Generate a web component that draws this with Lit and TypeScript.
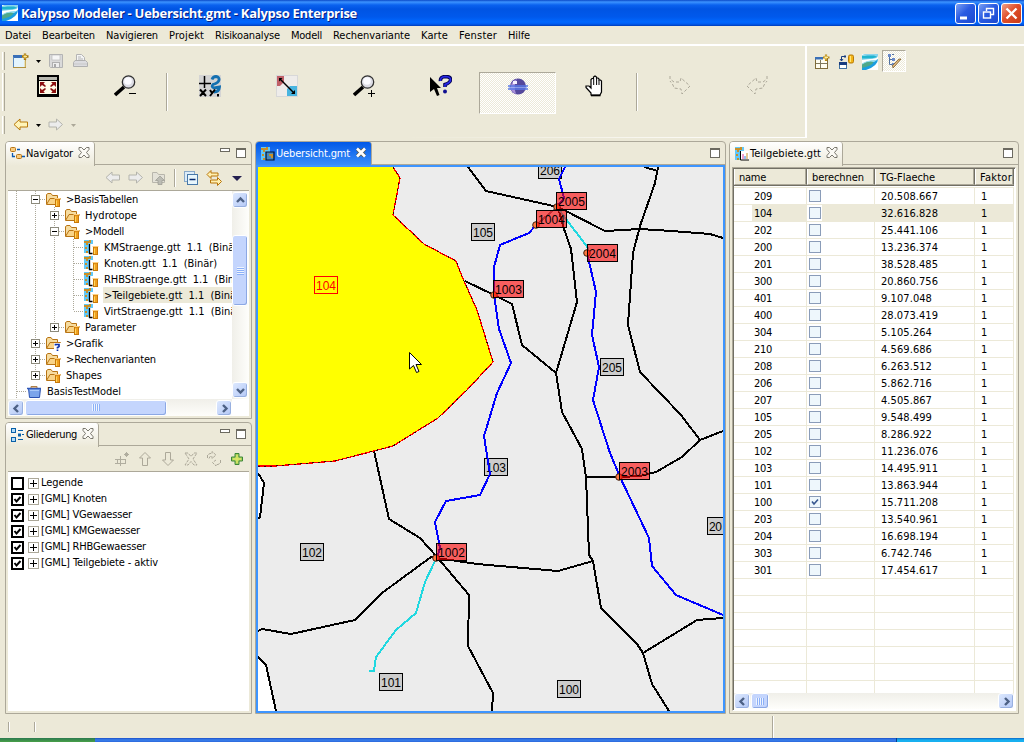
import { LitElement, html, svg, css, nothing } from "lit";
import { customElement, property } from "lit/decorators.js";
import { classMap } from "lit/directives/class-map.js";

/** Text run whose tracking is adjusted so that it fills a given width. */
@customElement("fit-text")
class FitText extends LitElement {
  @property() text = "";
  @property({ type: Number }) w = 0;
  static styles = css`
    :host { display: inline-block; white-space: pre; flex: none; }
    span { display: inline-block; white-space: pre; }
  `;
  render() {
    return html`<span>${this.text}</span>`;
  }
  updated() {
    const s = this.renderRoot.querySelector("span") as HTMLElement;
    s.style.letterSpacing = "0px";
    const n = s.getBoundingClientRect().width;
    if (this.w > 0) s.style.letterSpacing = (this.w - n) / this.text.length + "px";
  }
}

const ico = (body: unknown, w = 16, h = 16) =>
  html`<svg class="ico" width=${w} height=${h} viewBox="0 0 ${w} ${h}">${body}</svg>`;

const wave = svg`<rect width="16" height="16" fill="#fff"/><path d="M0 0H16V2Q15 5 8 5L0 6V3L8 3Z" fill="#8ad4ec"/><path d="M0 1.500L12 1.500L15.500 3Q10 5 0 4.500Z" fill="#1fb4cf"/><path d="M16 5Q16 12 4 16H0V13L11 8Z" fill="#1a9ee0"/><path d="M0 10Q6 6 12 7.500Q10 12 0 14Z" fill="#4fa88a"/><path d="M0 9.500Q6 5.500 15 6L12 8Q6 6.500 0 10.500Z" fill="#90dcf0"/>`;
const folder = svg`<path d="M1.500 13V3.500L3 2.500H6L7.500 4.500H12.500V7" fill="#f6dca0" stroke="#b87414"/><path d="M1.500 13.500L5 7.500H15.500L12 13.500Z" fill="#f9d488" stroke="#b87414"/>`;
const cyl = svg`<rect x="10.500" y="8" width="4" height="7.500" fill="#f0a020" stroke="#c87808"/><path d="M11.500 9.500V15" stroke="#ffd860"/><path d="M9.500 7.500H15.500" stroke="#ffd080"/>`;
const qmark = svg`<rect x="9" y="8" width="7" height="8" fill="#fff"/><path d="M10.500 10.500V9.500H14V11.500L12.500 12.500V13.500M12.500 14.500V16" fill="none" stroke="#0a30a8" stroke-width="1.700"/>`;
const mapBase = svg`<rect x="1" y="1" width="9" height="13" fill="#62c8f8"/><path d="M1 2H8V4H5V6H3V4H1ZM6 1H8V2H6ZM2 8H4V10H2ZM3 12H5V14H3Z" fill="#c89028"/>`;
const icons: Record<string, unknown> = {
  folderDb: ico(svg`${folder}${cyl}`),
  folderQ: ico(svg`${folder}${qmark}`),
  table: ico(svg`${mapBase}<rect x="7" y="5" width="4" height="9" fill="#fff"/><path d="M6.500 5V14.500H9.500" fill="none" stroke="#000" stroke-width="1.300"/>${cyl}`),
  project: ico(svg`<path d="M2.500 5.500H14.500L13.500 14.500H3.500Z" fill="#7aa4ea" stroke="#2850b0"/><path d="M5 5V3.500H11V5" fill="#f4c890" stroke="#b08048"/><path d="M1 5.500H15" stroke="#3058b8" stroke-width="1.500"/><path d="M4 7.500H13" stroke="#a8c8f8"/>`),
  navigator: ico(svg`<rect x="0.500" y="1.500" width="5" height="4" rx="1" fill="#f8cc80" stroke="#b87414"/><rect x="6.500" y="8.500" width="5" height="4" rx="1" fill="#f8cc80" stroke="#b87414"/><path d="M7 3.500H10M2.500 7V10.500H5M12 10.500H15" stroke="#0a58b0" stroke-width="1.300" fill="none"/>`),
  outline: ico(svg`<rect x="1.500" y="1.500" width="4" height="4" fill="#b4dcf8" stroke="#0860a8"/><rect x="1.500" y="10.500" width="4" height="4" fill="#b4dcf8" stroke="#0860a8"/><rect x="8.500" y="7" width="2" height="2" fill="#b4dcf8" stroke="#0860a8"/><path d="M8 3.500H13M12 7.500H14M8 12.500H13" stroke="#0860a8"/>`),
  mapFile: ico(svg`${mapBase}<path d="M6 6H14V14H6Z" fill="#4888b8" stroke="#001030" stroke-width="1.200"/><path d="M9 8H13V12H11V10H9Z" fill="#c89028"/>`),
  chartFile: ico(svg`${mapBase}<path d="M6 5H15V14H6Z" fill="#fff"/><path d="M6.500 5V14H15" fill="none" stroke="#000"/><path d="M9 8V13" stroke="#e040a0"/><path d="M11 10V13" stroke="#3080e0"/><path d="M13 7V13" stroke="#c89028"/>`),
  newWin: ico(svg`<rect x="0.500" y="3.500" width="12" height="11" fill="#e4f4fc" stroke="#b09040"/><rect x="0" y="2" width="9" height="3" fill="#3a70b8"/><path d="M0.500 4V14" stroke="#5888c0"/><path d="M12 7.500V14" stroke="#e8cf80"/><path d="M12 0.500V7M9 3.500H15.500" stroke="#a87808" stroke-width="2.400"/><path d="M12 1.500V5.500M10.500 3.500H14" stroke="#ffe890"/>`),
  save: ico(svg`<path d="M1.500 1.500H14.500V14.500H2.500L1.500 13.500Z" fill="#dadada" stroke="#b4b4b4"/><rect x="4" y="2" width="8" height="5" fill="#f6f6f6" stroke="#b4b4b4" stroke-width=".6"/><rect x="4.500" y="9.500" width="7" height="5" fill="#eee" stroke="#b0b0b0"/><rect x="6" y="11" width="2" height="3" fill="#a8a8a8"/>`),
  print: ico(svg`<path d="M4.500 7V1.500H9.500L12.500 4.500V7" fill="#f4f4f4" stroke="#b4b4b4"/><path d="M6 4H9M6 6H11" stroke="#b4b4b4"/><path d="M3 7.500H13.500L15.500 9.500V13.500H1.500V9.500Z" fill="#dcdce0" stroke="#b0b0b0"/><path d="M2 11H15" stroke="#c8c8c8"/>`),
  back: ico(svg`<path d="M1 7.500L7 2V5H14.500V10H7V13Z" fill="#fff4b8" stroke="#b87808" stroke-linejoin="round"/>`),
  backOff: ico(svg`<path d="M1 7.500L7 2V5H14.500V10H7V13Z" fill="#ececec" stroke="#b4b4ac" stroke-linejoin="round"/>`),
  fwdOff: ico(svg`<path d="M14.500 7.500L8.500 2V5H1V10H8.500V13Z" fill="#ececec" stroke="#b4b4ac" stroke-linejoin="round"/>`),
  upOff: ico(svg`<path d="M1.500 12.500V2.500H6L7.500 4.500H13.500V12.500Z" fill="#e4e2d8" stroke="#b8b6ac"/><path d="M9 6L13.500 10.500H11V14.500H7V10.500H4.500Z" fill="#bcbcb4" stroke="#98988f" stroke-width=".7"/>`),
  collapse: ico(svg`<rect x="1.500" y="1.500" width="10" height="10" fill="#dcecf8" stroke="#88a8c8"/><rect x="4.500" y="4.500" width="10" height="10" fill="#e8f6fc" stroke="#4878a8"/><path d="M6.500 9.500H12.500" stroke="#082c70" stroke-width="1.400"/>`),
  link: ico(svg`<path d="M1 4.500L5 0.500V3H12V6H5V8.500Z" fill="#fff0b0" stroke="#b87408"/><path d="M15.500 11.500L11.500 7.500V10H4.500V13H11.500V15.500Z" fill="#fff0b0" stroke="#b87408"/>`),
  addOff: ico(svg`<path d="M1 8.500H12M1 12.500H12M3.500 8V13M6.500 5V15M12.500 1V6M10 3.500H15M11 2L14 5M14 2L11 5M11.500 8V13" stroke="#b0ad9f" fill="none"/>`),
  arrUp: ico(svg`<path d="M8 1.500L13.500 7H10.500V14.500H5.500V7H2.500Z" fill="none" stroke="#aca899"/>`),
  arrDown: ico(svg`<path d="M8 14.500L13.500 9H10.500V1.500H5.500V9H2.500Z" fill="none" stroke="#aca899"/>`),
  delOff: ico(svg`<path d="M2 2L5 2L8 5.500L11 2H14L10 8L14 14H11L8 10.500L5 14H2L6 8Z" fill="none" stroke="#aca899" stroke-dasharray="3 1"/>`),
  refreshOff: ico(svg`<path d="M1.500 7V4L4 2.500H6V0.500L10 4L6 7.500V5.500H4L3 7.500M14.500 9V12L12 13.500H10V15L6.500 11.500L10 9" fill="none" stroke="#aca899" stroke-dasharray="3 1"/>`),
  plusGreen: ico(svg`<path d="M6 2.500H10V6H13.500V10H10V13.500H6V10H2.500V6H6Z" fill="#a8d060" stroke="#3c8838"/><path d="M8 4V12M4 8H12" stroke="#e0e868" stroke-width="1.400"/>`),
  persNew: ico(svg`<rect x="1.500" y="3.500" width="12" height="11" fill="#fffdf0" stroke="#806c38"/><rect x="1" y="3" width="8" height="2.500" fill="#3a70b8"/><path d="M2 9.500H13M6.500 6V14" stroke="#80785c"/><path d="M12 0.500V7M9 3.500H15.500" stroke="#b88810" stroke-width="2.200"/><path d="M12 1.500V5.500M10.500 3.500H14" stroke="#fff0a0"/>`),
  persDb: ico(svg`<rect x="1.500" y="8.500" width="7" height="6" fill="#fff" stroke="#4070a0"/><rect x="1" y="8" width="8" height="3" fill="#183c80"/><path d="M3.500 7V2.500H8M2 5L3.500 7L5 5M7 1V4" stroke="#183c80" fill="none"/><rect x="10.500" y="1" width="5" height="8" rx="1.500" fill="#f4b418" stroke="#b87c08"/><path d="M12.500 2V8" stroke="#ffe878"/>`),
  wave: ico(wave),
  persTree: ico(svg`<path d="M3.500 1V11.500H6M3.500 6.500H6M6 1.500H8" stroke="#5070a0" fill="none"/><path d="M2 1H5V4H2ZM6 5H9V8H6ZM6 10H9V13H6Z" fill="#6888c8"/><path d="M15 6L9 13L7 15L6.500 12.500L13 6Z" fill="#e0b880" stroke="#806028" stroke-width=".8"/>`),
  fit: ico(svg`<rect width="22" height="22" fill="#000"/><rect x="2" y="2" width="18" height="3" fill="#b8b8b0"/><rect x="2" y="6" width="18" height="13" fill="#fffde8"/><path d="M3 7H8L6.500 8.500L9 11L8 12L5 10L3 12ZM19 7H14L15.500 8.500L13 11L14 12L17 10L19 12ZM3 18H8L6.500 16.500L9 14L8 13L5 15L3 13ZM19 18H14L15.500 16.500L13 14L14 13L17 15L19 13Z" fill="#8c1010"/>`, 22, 22),
  zoomOut: ico(svg`<path d="M1 20L10 12" stroke="#000" stroke-width="3.600"/><circle cx="14.500" cy="7" r="6.200" fill="#dcdce4" stroke="#303030" stroke-width="1.300"/><circle cx="14" cy="6" r="3.800" fill="#fbfbff"/><path d="M15 18.500H22" stroke="#000"/>`, 22, 22),
  zoomIn: ico(svg`<path d="M1 20L10 12" stroke="#000" stroke-width="3.600"/><circle cx="14.500" cy="7" r="6.200" fill="#dcdce4" stroke="#303030" stroke-width="1.300"/><circle cx="14" cy="6" r="3.800" fill="#fbfbff"/><path d="M15 18.500H22M18.500 15V22" stroke="#000"/>`, 22, 22),
  coords: ico(svg`<rect width="22" height="22" fill="#d4d4d4"/><path d="M0 8.500H12M5.500 1V13" stroke="#000" stroke-width="1.500"/><path d="M13 4.500Q14 1.500 17 1.500Q20.500 2 20 5Q19.500 8 14 9.500Q12 12 15 13L20.500 12Q20 17 15 17" fill="none" stroke="#1470b0" stroke-width="2.800"/><path d="M1 14.500L7 21M7 14.500L1 21M11 15L13 18M16 14.500L11 21M19 19V21.500" stroke="#000" stroke-width="2"/>`, 22, 22),
  measure: ico(svg`<rect x=".5" y=".5" width="21" height="21" fill="#eeecea" stroke="#d8d8d8"/><path d="M1 1H8V7L4 11H1Z" fill="#c06068"/><path d="M11 14L14 11H21V21H11Z" fill="#48b4e0"/><path d="M4 4L18 18" stroke="#000" stroke-width="1.400"/><path d="M3 3H6.500L3 6.500ZM19 19H15L19 15Z" fill="#000"/>`, 22, 22),
  info: ico(svg`<path d="M0 2V17L4 14L7 21L9.500 20L7 13H11Z" fill="#000"/><path d="M10.500 6Q10 2 15 1.500Q21 1.500 20.500 5Q20 8 15 9.500V12" fill="none" stroke="#000050" stroke-width="3.600"/><path d="M10.500 6Q10 2 15 1.500Q21 1.500 20.500 5Q20 8 15 9.500V12" fill="none" stroke="#2828e8" stroke-width="1.600"/><circle cx="15" cy="16.500" r="2" fill="#101090"/>`, 22, 22),
  globe: ico(svg`<circle cx="11" cy="10.500" r="8" fill="#54489c"/><path d="M4 14Q3 5 10 3Q6 9 9 18Q6 17 4 14Z" fill="#a890d8"/><rect x="6" y="5" width="4" height="3" fill="#f4f0ff"/><path d="M1 10H21M1 13H21" stroke="#5878e8" stroke-width="1.600"/><path d="M2 11.500H20" stroke="#98b0f8" stroke-width=".8"/>`, 22, 22),
  hand: ico(svg`<path d="M7 20V18L2 12.500V11H5L7 13V4.500L8 3.500H9.500V2L11 1L12.500 2V3H14L15 4V5H16.500L17.500 6V17L16 20Z" fill="#fff" stroke="#000" stroke-width="1.200"/><path d="M9.700 4V10M12.600 3V10M15 5V10" stroke="#000"/><path d="M7 20.500H16.500" stroke="#000" stroke-width="1.600"/>`, 22, 22),
  redoOff: ico(svg`<path d="M1 1V4L5 7L11 7L12 3L21 11L13 19L12 14L5 13L4 10L1 6" fill="none" stroke="#aca899" stroke-dasharray="3 2"/>`, 22, 22),
  undoOff: ico(svg`<path d="M21 1V4L17 7L11 7L10 3L1 11L9 19L10 14L17 13L18 10L21 6" fill="none" stroke="#aca899" stroke-dasharray="3 2"/>`, 22, 22),
  close: html`<svg class="ico close" width="12" height="11" viewBox="0 0 12 11"><path d="M1 .5H3.500L6 3L8.500 .5H11V2.500L8.500 5.500L11 8.500V10.500H8.500L6 8L3.500 10.500H1V8.500L3.500 5.500L1 2.500Z" fill="#fbfaf5" stroke="#6c6a60" stroke-width=".9"/></svg>`,
  closeActive: html`<svg class="ico close" width="12" height="11" viewBox="0 0 12 11"><path d="M2.500 2L9.500 9M9.500 2L2.500 9" stroke="#5a5848" stroke-width="4"/><path d="M2 1.500L10 9.500M10 1.500L2 9.500" stroke="#fff" stroke-width="2.600"/></svg>`,
};

const caret = (c = "#000") => html`<svg class="caret" width="5" height="3"><path d="M0 0H5L2.500 3Z" fill=${c} /></svg>`;
const chevrons: Record<string, string> = {
  l: "M9 4L5.500 7.500L9 11", r: "M6 4L9.500 7.500L6 11", u: "M4 9L7.500 5.500L11 9", d: "M4 6L7.500 9.500L11 6",
};
const arrow = (d: string) =>
  html`<span class="sbtn"><svg width="15" height="15"><path d=${chevrons[d]} fill="none" stroke="#4d6185" stroke-width="2.400"/></svg></span>`;

const menu: [string, number][] = [
  ["Datei", 26], ["Bearbeiten", 53], ["Navigieren", 52], ["Projekt", 35], ["Risikoanalyse", 65],
  ["Modell", 31], ["Rechenvariante", 77], ["Karte", 27], ["Fenster", 38], ["Hilfe", 22],
];
const tree: { g: string[]; i: string; t: string; w: number; sel?: boolean }[] = [
  { g: ["|", "-"], i: "folderDb", t: ">BasisTabellen", w: 72 },
  { g: ["|", "|", "+"], i: "folderDb", t: "Hydrotope", w: 52 },
  { g: ["|", "|", "-"], i: "folderDb", t: ">Modell", w: 39 },
  { g: ["|", "|", "|", "t"], i: "table", t: "KMStraenge.gtt  1.1  (Binär)", w: 138 },
  { g: ["|", "|", "|", "t"], i: "table", t: "Knoten.gtt  1.1  (Binär)", w: 113 },
  { g: ["|", "|", "|", "t"], i: "table", t: "RHBStraenge.gtt  1.1  (Binär)", w: 144 },
  { g: ["|", "|", "|", "t"], i: "table", t: ">Teilgebiete.gtt  1.1  (Binär)", w: 140, sel: true },
  { g: ["|", "|", "|", "l"], i: "table", t: "VirtStraenge.gtt  1.1  (Binär)", w: 140 },
  { g: ["|", "|", "+l"], i: "folderDb", t: "Parameter", w: 51 },
  { g: ["|", "+"], i: "folderQ", t: ">Grafik", w: 37 },
  { g: ["|", "+"], i: "folderDb", t: ">Rechenvarianten", w: 90 },
  { g: ["|", "+l"], i: "folderDb", t: "Shapes", w: 36 },
  { g: ["t"], i: "project", t: "BasisTestModel", w: 74 },
];
const layers: [boolean, string, number][] = [
  [false, "Legende", 42], [true, "[GML] Knoten", 66], [true, "[GML] VGewaesser", 91],
  [true, "[GML] KMGewaesser", 99], [true, "[GML] RHBGewaesser", 105], [true, "[GML] Teilgebiete - aktiv", 117],
];
const rows: [string, string][] = [
  ["209", "20.508.667"], ["104", "32.616.828"], ["202", "25.441.106"], ["200", "13.236.374"],
  ["201", "38.528.485"], ["300", "20.860.756"], ["401", "9.107.048"], ["400", "28.073.419"],
  ["304", "5.105.264"], ["210", "4.569.686"], ["208", "6.263.512"], ["206", "5.862.716"],
  ["207", "4.505.867"], ["105", "9.548.499"], ["205", "8.286.922"], ["102", "11.236.076"],
  ["103", "14.495.911"], ["101", "13.863.944"], ["100", "15.711.208"], ["203", "13.540.961"],
  ["204", "16.698.194"], ["303", "6.742.746"], ["301", "17.454.617"],
  ["", ""], ["", ""], ["", ""], ["", ""], ["", ""], ["", ""], ["", ""],
];

const borders = [
  "468,167 486,191 558,207 605,231 640,229 672,231 710,234 723,238",
  "644,167 658,171", "658,167 655,183 640,226 633,253 628,325 640,372 681,415 700,440 723,431",
  "700,440 682,457 656,472 640,476 620,477 586,477",
  "558,207 563,226 571,249 577,302 556,373 562,412 582,449 586,477 589,555 593,561 601,608 637,644 643,653 652,684 669,711",
  "643,653 697,620 723,618",
  "465,281 494,295 512,304 522,345 556,373",
  "374,451 389,519 420,538 437,557 469,595 468,646 493,693 492,711",
  "437,558 431,557 382,593 355,620 291,634 262,629 258,631",
  "437,558 477,564 500,566 558,571 593,561",
  "258,473 264,483 260,517 258,519", "258,657 266,665 276,711",
];
const rivers = [
  "565,167 559,179 564,198 557,207",
  "536,225 529,233 500,245 494,267 494,295 499,329 511,363 497,393 484,436 490,474 480,495 446,501 435,522 440,548 437,558",
  "587,253 596,292 592,335 599,367 593,400 610,453 620,477 649,538 652,566 676,595 723,615",
];
const areas: [number, number, string][] = [
  [471, 223, "105"], [538, 161, "206"], [600, 358, "205"], [484, 458, "103"], [300, 543, "102"],
  [379, 673, "101"], [557, 680, "100"], [707, 517, "20"],
];
const nodes: [number, number, string, number, number][] = [
  [556, 192, "2005", 557, 207], [536, 210, "1004", 536, 225], [587, 244, "2004", 587, 253],
  [493, 280, "1003", 494, 295], [619, 462, "2003", 619, 477], [436, 543, "1002", 436, 558],
];
const yellow = "393,167 400,178 393,215 424,244 456,261 464,281 477,310 493,362 467,390 438,418 393,446 335,461 275,466 258,466";

@customElement("app-root")
class AppRoot extends LitElement {
  static styles = css`
    :host { display: flex; flex-direction: column; width: 1024px; height: 742px; overflow: hidden; background: #ece9d8;
      font: 11px/16px "DejaVu Sans Condensed", "DejaVu Sans", sans-serif; color: #000; }
    * { box-sizing: border-box; }
    svg { display: block; flex: none; }
    .title { height: 26px; flex: none; display: flex; align-items: center; padding: 0 2px 0 2px;
      background: linear-gradient(#0a49c8 0, #3c93ff 2px, #0a62ef 5px, #0054e3 9px, #0059ec 17px, #0068ff 22px, #005cf0 24px, #003cb8 26px); }
    .title .name { flex: 1; padding-left: 3px; color: #fff; font: bold 13px/26px "Open Sans", sans-serif; text-shadow: 1px 1px #0a1e80; }
    .wbtns { display: flex; gap: 2px; }
    .wbtn { width: 21px; height: 21px; border: 1px solid #fff; border-radius: 3px; background: linear-gradient(135deg, #7ba0f4, #2a5be2 45%, #1b49d0); }
    .wbtn.x { background: linear-gradient(135deg, #f0a088, #e0502c 45%, #c83a18); }
    .menu { height: 20px; flex: none; display: flex; gap: 11px; padding: 1px 0 0 5px; line-height: 17px; border-bottom: 2px solid #fff; }
    .bars { height: 95px; flex: none; display: flex; }
    .left { width: 807px; height: 92px; border-right: 2px solid #fbfaf6; border-bottom: 1px solid; border-image: linear-gradient(90deg, transparent 50%, #fff) 1;
      border-radius: 0 0 3px; padding: 5px 0 0 2px; }
    .r1, .r3 { display: flex; align-items: center; height: 20px; }
    .handle { width: 3px; border-right: 1px solid #aca899; border-left: 1px solid #fff; align-self: stretch; margin: 1px 0; }
    .r1 .ico, .r3 .ico { margin-left: 8px; }
    .r1 .caret, .r3 .caret { margin-left: 7px; }
    .r1 .caret + .ico, .r3 .caret + .ico { margin-left: 7px; }
    .r2 { display: flex; height: 44px; align-items: flex-start; padding-top: 1px; }
    .r2 .handle { height: 38px; align-self: auto; margin: 1px 0 0; }
    .big { width: 77px; height: 42px; padding: 3px 0 0; display: flex; justify-content: center; }
    .first { margin-left: 4px; }
    .sep { width: 2px; height: 38px; margin: 1px 3px 0 3px; border-left: 1px solid #aca899; border-right: 1px solid #fff; }
    .pressed { border: 1px solid; border-color: #aca899 #fff #fff #aca899; background: repeating-conic-gradient(#fff 0 25%, #ece9d8 0 50%) 0 0 / 2px 2px; }
    .persp { display: flex; gap: 8px; padding: 1px 0 0 7px; height: 30px; align-items: center; }
    .persp .pressed { margin: -1px 0 0 -4px; padding: 2px 3px; width: 24px; height: 22px; }
    .main { flex: none; height: 573px; display: flex; padding-left: 5px; }
    .col { width: 247px; display: flex; flex-direction: column; gap: 3px; margin-right: 3px; }
    .pane { border: 1px solid #aca899; border-radius: 4px 4px 0 0; display: flex; flex-direction: column; background: #ece9d8; overflow: hidden; }
    .nav { height: 278px; }
    .outl { height: 292px; }
    .tabs { height: 23px; flex: none; display: flex; align-items: stretch; border-bottom: 1px solid #aca899; }
    .tab { display: flex; align-items: center; margin-bottom: -1px; height: 24px; border-right: 1px solid #aca899; border-radius: 0 3px 0 0;
      background: linear-gradient(#fff, #ece9d8); padding-left: 4px; line-height: 22px; }
    .tab .close { margin: 0 4px 3px 5px; }
    .sp { flex: 1; }
    .min { width: 10px; height: 4px; border: 1px solid #6c6a60; background: #fff; margin: 6px 6px 0 0; }
    .max { width: 10px; height: 10px; border: 1px solid #6c6a60; border-top-width: 2px; background: #fff; margin: 6px 5px 0 0; }
    .tools { height: 26px; flex: none; display: flex; align-items: center; justify-content: flex-end; gap: 7px; padding-right: 4px; border-bottom: 1px solid #aca899; margin: 0 2px; }
    .tsep { width: 2px; height: 18px; border-left: 1px solid #aca899; border-right: 1px solid #fff; }
    .treebox { display: grid; grid-template: 208px 17px / 224px 17px; margin: 0 2px; background: #fff; }
    .tree { overflow: hidden; background: #fff; }
    .node { display: flex; height: 16px; align-items: center; white-space: pre; }
    .node svg:first-child { margin-left: -1px; }
    .node .lab { padding-left: 1px; margin-left: 4px; line-height: 16px; height: 16px; padding-top: 1px; flex: none; }
    .node .lab.sel { background: #ece9d8; flex: 1 0 auto; }
    .vs { display: flex; flex-direction: column; justify-content: space-between; background: linear-gradient(90deg, #f0efe9, #fefefb); padding: 1px 0; }
    .hs { display: flex; align-items: center; background: linear-gradient(#f0efe9, #fefefb); }
    .sbtn { width: 16px; height: 16px; flex: none; border: 1px solid #fff; border-radius: 3px; background: linear-gradient(135deg, #dce8fe, #b4c8f6); box-shadow: inset -1px -1px #98b0e0; }
    .thumb { border: 1px solid #fff; border-radius: 3px; background: #c4d5fd; box-shadow: inset -1px -1px #8ca8e4; display: flex; align-items: center; justify-content: center; }
    .hs .thumb { width: 142px; height: 16px; margin: 0 auto 0 1px; }
    .hs.small .thumb { width: 18px; }
    .vs .thumb { width: 16px; height: 71px; margin: 27px 0 auto; }
    .grip { width: 8px; height: 7px; background: repeating-linear-gradient(90deg, #eef4fe 0 1px, #8cb0f8 1px 2px); }
    .vs .grip { background: repeating-linear-gradient(#eef4fe 0 1px, #8cb0f8 1px 2px); width: 7px; height: 8px; }
    .layers { flex: 1; background: #fff; margin: 0 2px 2px; padding: 3px 0 0 3px; }
    .layer { display: flex; height: 16px; align-items: center; }
    .layer fit-text { margin-left: 2px; }
    .layer svg + svg { margin-left: 4px; }
    .editor { width: 471px; height: 573px; margin-right: 3px; }
    .editor .tab { background: linear-gradient(#0058e8, #3c90fa); color: #fff; }
    .mapbox { border: 2px solid #3d95ff; }
    .map { font: 12px "Liberation Sans", Arial, sans-serif; }
    .right { width: 290px; height: 573px; }
    .grid { flex: none; height: 544px; width: 284px; margin: 2px 0 0 2px; border: 1px solid #aca899; border-right-color: #fff; border-bottom-color: #fff; box-shadow: inset 1px 1px #716f64; padding: 1px 1px 1px 1px; overflow: hidden; background: #fff; display: flex; flex-direction: column; }
    .tr { display: grid; grid-template-columns: 73px 68px 100px 39px; height: 17px; flex: none; border-bottom: 1px solid #ece9d8; line-height: 17px; }
    .body { flex: 1; overflow: hidden; border-top: 1px solid #ece9d8; margin-top: 1px; min-height: 0; }
    .body .tr { line-height: 18px; }
    .tr > span { border-right: 1px solid #ece9d8; height: 16px; padding-left: 6px; }
    .tr > span.n { padding-left: 20px; }
    .tr > span.c { padding: 2px 0 0 2px; }
    .tr.sel > span { background: #ece9d8; }
    .tr.sel > span.n { background: linear-gradient(90deg, #fff 18px, #ece9d8 18px); }
    .tr.sel > span.c { background: linear-gradient(90deg, #fff 15px, #ece9d8 15px); }
    .tr.head { height: 17px; border-bottom: 1px solid #716f64; background: #ece9d8; box-shadow: 0 -1px #716f64; }
    .tr.head > span { padding-left: 4px; border-right: 1px solid #716f64; border-left: 1px solid #fff; border-bottom: 1px solid #aca899; box-shadow: inset -1px 0 #aca899; }
    .status { height: 24px; flex: none; display: flex; padding: 8px 0 0 8px; }
    .status i { width: 2px; border-left: 1px solid #aca899; border-right: 1px solid #fff; height: 10px; }
    .status i.mid { margin-left: 24px; }
    .status i.tall { margin: -6px 0 0 736px; height: 22px; }
    .task { height: 4px; flex: none; display: flex; background: linear-gradient(#1c50c8, #3a80ec 2px, #2c68dc); }
    .start { width: 95px; background: linear-gradient(#2c7a50, #48a048); }
    .tray { width: 128px; margin-left: auto; background: linear-gradient(#0c68c8, #18b0f0 2px); border-left: 1px solid #083c88; }
  `;

  guide(k: string) {
    const box = k[0] === "+" || k[0] === "-";
    const last = k.endsWith("l");
    return html`<svg width="19" height="16" shape-rendering="crispEdges">
      <g stroke="#aca899" stroke-dasharray="1 1">
        <path d="M9.500 0V${last ? 8 : 16}" />
        ${k !== "|" ? svg`<path d="M10 8.500H19"/>` : nothing}
      </g>
      ${box ? svg`<rect x="5.500" y="4.500" width="8" height="8" fill="#fff" stroke="#8c8a7c"/><path d="M7 8.500H12${k[0] === "+" ? "M9.500 6V11" : ""}" stroke="#000"/>` : nothing}
    </svg>`;
  }

  tabBar(icon: string, label: string, w: number, min: boolean, active = false) {
    return html`<div class="tabs">
      <div class="tab">${icons[icon]}<fit-text text=${label} w=${w}></fit-text>${icons[active ? "closeActive" : "close"]}</div>
      <span class="sp"></span>${min ? html`<span class="min"></span>` : nothing}<span class="max"></span>
    </div>`;
  }

  map() {
    return html`<svg class="map" width="465" height="544" viewBox="258 167 465 544">
      <g shape-rendering="crispEdges">
        <rect x="258" y="167" width="465" height="544" fill="#ececec" />
        <path d="M258 473L264 483L260 517L258 519ZM258 657L266 665L276 711H258Z" fill="#fff" />
        ${areas.map(([x, y]) => svg`<rect x=${x + 0.5} y=${y + 0.5} width="23" height="17" fill="#ccc" stroke="#000"/>`)}
      </g>
      ${areas.map(([x, y, t]) => svg`<text x=${x + 2} y=${y + 13.5} textLength=${t.length * 7 - 1}>${t}</text>`)}
      <g shape-rendering="crispEdges" fill="none" stroke-width="2">
        ${borders.map((p) => svg`<polyline points=${p} stroke="#000"/>`)}
        <polygon points="258,167 ${yellow}" fill="#ff0" stroke="none" />
        <polyline points=${yellow} stroke="#f00" stroke-width="1.300" />
        <polyline points=${yellow} stroke="#300" stroke-width="1" stroke-dasharray="2 4" />
        <rect x="314.500" y="276.500" width="23" height="17" stroke="#f00" stroke-width="1" />
        <polyline points="560,211 588,248 587,253" stroke="#20d8e0" />
        <polyline points="435,561 425,582 416,613 396,630 376,657 374,671 369,671" stroke="#20d8e0" />
        <polyline points="557,207 536,225" stroke="#707080" />
        ${rivers.map((p) => svg`<polyline points=${p} stroke="#00f"/>`)}
      </g>
      <text x="316" y="289.500" textLength="20" fill="#f00">104</text>
      ${nodes.map(([, , , cx, cy]) => svg`<circle cx=${cx} cy=${cy} r="3.300" fill="#ff7840" stroke="#402010"/>`)}
      ${nodes.map(([x, y, t]) => svg`<rect x=${x + 0.5} y=${y + 0.5} width="30" height="17" fill="#f00" fill-opacity=".6" stroke="#000"/><text x=${x + 2} y=${y + 13.5} textLength="27">${t}</text>`)}
      <path d="M409.500 352.500V369L413.500 365.500L416.500 372.500L419 371.500L416 364.500H421.500Z" fill="#fff" stroke="#000" />
    </svg>`;
  }

  render() {
    return html`
      <div class="title">${ico(wave)}
        <span class="name"><fit-text text="Kalypso Modeler - Uebersicht.gmt - Kalypso Enterprise" w="336"></fit-text></span>
        <span class="wbtns">
          <span class="wbtn"><svg width="19" height="19"><path d="M4 14H11" stroke="#fff" stroke-width="3"/></svg></span>
          <span class="wbtn"><svg width="19" height="19"><path d="M7.500 7V4.500H14.500V10.500H12" fill="none" stroke="#fff" stroke-width="1.400"/><rect x="4.500" y="8" width="7" height="6" fill="none" stroke="#fff" stroke-width="1.400"/></svg></span>
          <span class="wbtn x"><svg width="19" height="19"><path d="M4.500 4.500L14.500 14.500M14.500 4.500L4.500 14.500" stroke="#fff" stroke-width="2.400"/></svg></span>
        </span>
      </div>
      <div class="menu">${menu.map(([t, w]) => html`<fit-text text=${t} w=${w}></fit-text>`)}</div>
      <div class="bars">
        <div class="left">
          <div class="r1"><span class="handle"></span>${icons.newWin}${caret()}${icons.save}${icons.print}</div>
          <div class="r2"><span class="handle"></span>
            <span class="big first">${icons.fit}</span><span class="big">${icons.zoomOut}</span><span class="sep"></span>
            <span class="big">${icons.coords}</span><span class="big">${icons.measure}</span><span class="big">${icons.zoomIn}</span>
            <span class="big">${icons.info}</span><span class="big pressed">${icons.globe}</span><span class="big">${icons.hand}</span>
            <span class="sep"></span><span class="big">${icons.redoOff}</span><span class="big">${icons.undoOff}</span>
          </div>
          <div class="r3"><span class="handle"></span>${icons.back}${caret()}${icons.fwdOff}${caret("#aca899")}</div>
        </div>
        <div class="persp">${icons.persNew}${icons.persDb}${icons.wave}<span class="pressed">${icons.persTree}</span></div>
      </div>
      <div class="main">
        <div class="col">
          <div class="pane nav">
            ${this.tabBar("navigator", "Navigator", 47, true)}
            <div class="tools">${icons.backOff}${icons.fwdOff}${icons.upOff}<span class="tsep"></span>${icons.collapse}${icons.link}
              <svg width="16" height="16"><path d="M3 6H13L8 11Z" fill="#242050" /></svg></div>
            <div class="treebox">
              <div class="tree">${tree.map((n) => html`<div class="node">${n.g.map((k) => this.guide(k))}${icons[n.i]}<span class=${classMap({ lab: true, sel: !!n.sel })}><fit-text text=${n.t} w=${n.w}></fit-text></span></div>`)}</div>
              <div class="vs">${arrow("u")}<span class="thumb"><span class="grip"></span></span>${arrow("d")}</div>
              <div class="hs">${arrow("l")}<span class="thumb"><span class="grip"></span></span>${arrow("r")}</div>
            </div>
          </div>
          <div class="pane outl">
            ${this.tabBar("outline", "Gliederung", 51, true)}
            <div class="tools">${icons.addOff}${icons.arrUp}${icons.arrDown}${icons.delOff}${icons.refreshOff}${icons.plusGreen}</div>
            <div class="layers">${layers.map(([on, t, w]) => html`<div class="layer">
              <svg width="13" height="13"><rect x="1" y="1" width="11" height="11" fill="#fff" stroke="#000" stroke-width="2"/>${on ? svg`<path d="M3.500 6L5.500 8.500L9.500 4" fill="none" stroke="#000" stroke-width="2"/>` : nothing}</svg>
              <svg width="11" height="11"><rect x=".5" y=".5" width="10" height="10" fill="#fff" stroke="#aca899"/><path d="M2 5.500H9M5.500 2V9" stroke="#000"/></svg>
              <fit-text text=${t} w=${w}></fit-text></div>`)}</div>
          </div>
        </div>
        <div class="pane editor">
          ${this.tabBar("mapFile", "Uebersicht.gmt", 74, false, true)}
          <div class="mapbox">${this.map()}</div>
        </div>
        <div class="pane right">
          ${this.tabBar("chartFile", "Teilgebiete.gtt", 71, false)}
          <div class="grid">
            <div class="tr head"><span><fit-text text="name" w="27"></fit-text></span><span><fit-text text="berechnen" w="52"></fit-text></span><span><fit-text text="TG-Flaeche" w="55"></fit-text></span><span><fit-text text="Faktor" w="32"></fit-text></span></div>
            <div class="body">${rows.map(([n, v], i) => html`<div class=${classMap({ tr: true, sel: i === 1 })}>
              <span class="n">${n ? html`<fit-text text=${n} w="18"></fit-text>` : nothing}</span>
              <span class="c">${n ? html`<svg width="12" height="12"><rect x=".5" y=".5" width="11" height="11" fill="#eef7fc" stroke="#8a9cb8"/>${n === "100" ? svg`<path d="M3 5.500L5 8L9 3.500" fill="none" stroke="#385890" stroke-width="1.600"/>` : nothing}</svg>` : nothing}</span>
              <span>${v ? html`<fit-text text=${v} w=${v.length === 10 ? 57 : 51}></fit-text>` : nothing}</span>
              <span>${v ? "1" : ""}</span></div>`)}</div>
            <div class="hs small">${arrow("l")}<span class="thumb"><span class="grip"></span></span>${arrow("r")}</div>
          </div>
        </div>
      </div>
      <div class="status"><i></i><i class="mid"></i><i class="tall"></i></div>
      <div class="task"><span class="start"></span><span class="tray"></span></div>
    `;
  }
}
